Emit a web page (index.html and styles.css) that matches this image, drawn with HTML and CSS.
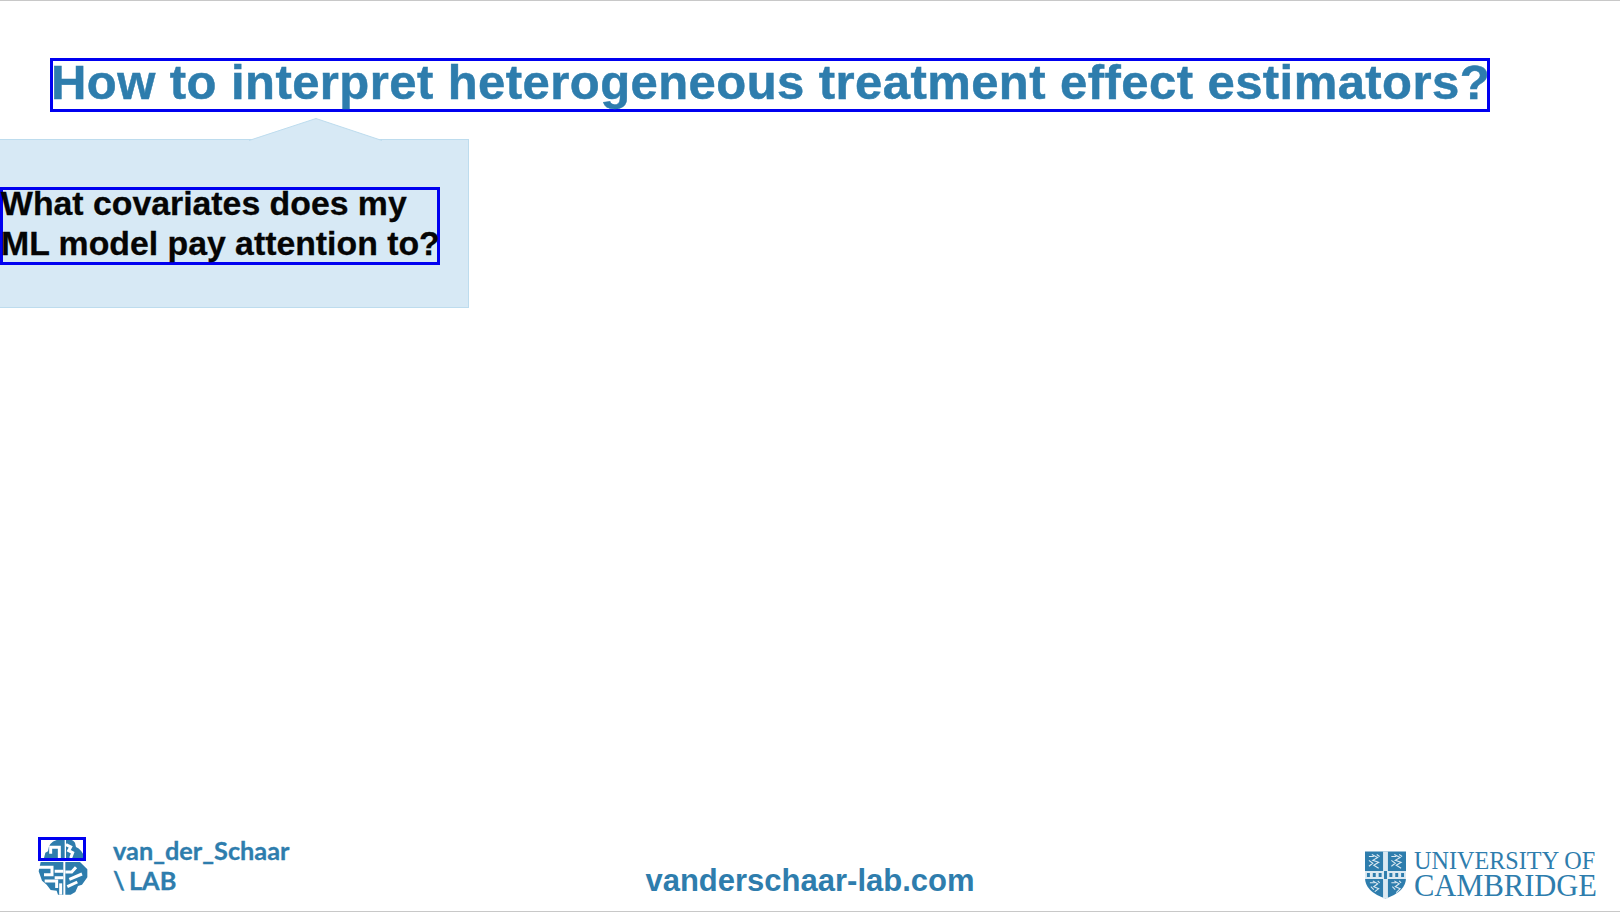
FILE: index.html
```html
<!DOCTYPE html>
<html lang="en">
<head>
<meta charset="utf-8">
<title>How to interpret heterogeneous treatment effect estimators?</title>
<link rel="stylesheet" href="styles.css">
</head>
<body>
<main class="slide">
  <h1 class="title"><span class="title-text">How to interpret heterogeneous treatment effect estimators?</span></h1>
  <section class="callout">
    <svg class="callout-tip" width="134" height="23" viewBox="0 0 134 23" aria-hidden="true">
      <path d="M0 22.5 L67 0.5 L133 22.5" fill="#d7e9f5" stroke="#bddcee" stroke-width="1"/>
    </svg>
    <p class="question"><span class="question-text">What covariates does my<br>ML model pay attention to?</span></p>
  </section>
  <footer class="footer">
    <div class="lab">
      <div class="lab-mark">
        <svg class="brain" width="50" height="60" viewBox="24 25 150 180" aria-hidden="true">
          <path fill="#2e7dad" d="M42 88 L46 72 L54 68 Q56 40 80 34 L104 34 L104 88 Z"/>
          <path fill="#2e7dad" d="M108 34 Q125 28 135 42 L138 55 Q155 62 165 88 L108 88 Z"/>
          <path fill="#2e7dad" d="M32 100 L100 100 L100 198 L84 198 L80 186 L62 184 L50 168 L36 156 L26 128 Z"/>
          <path fill="#2e7dad" d="M106 100 H150 L172 122 L172 146 L156 168 L144 172 L136 190 L122 198 L106 198 Z"/>
          <g fill="none" stroke="#fff" stroke-width="9">
            <path d="M62 75 V56 H88 V88"/>
            <path d="M108 48 L122 55 L116 66 L128 72 L122 88"/>
            <path d="M24 116 H66 V138 H42"/>
            <path d="M74 128 H100 M74 147 H100"/>
            <path d="M44 157 H80 V178"/>
            <path d="M92 164 V198"/>
            <path d="M106 130 H125 L138 116"/>
            <path d="M118 152 L156 136"/>
            <path d="M112 174 L142 160"/>
          </g>
        </svg>
      </div>
      <div class="lab-name">van_der_Schaar<br>\ LAB</div>
    </div>
    <div class="site">vanderschaar-lab.com</div>
    <div class="cambridge">
      <svg class="shield" width="41" height="48" viewBox="0 0 42 48" aria-hidden="true">
        <path d="M0 0 H42 V27 Q42 41 21 48 Q0 41 0 27 Z" fill="#2e7dad"/>
        <path d="M18.5 0 H23.5 V48 H18.5 Z M0 20 H42 V28 H0 Z" fill="#dbe9f2"/>
        <g fill="none" stroke="#dbe9f2" stroke-width="1.1">
          <path d="M4 5 H9 M7 3 L13 6 L8 9 L14 11 L9 14 L14 17 M4 9 L8 12 L4 15 M12 3 L15 5"/>
          <path d="M27 5 H32 M30 3 L36 6 L31 9 L37 11 L32 14 L37 17 M27 9 L31 12 L27 15 M35 3 L38 5"/>
          <path d="M5 32 H10 M8 30 L13 33 L9 36 L14 38 L10 41 M6 36 L9 39 M13 30 L15 32"/>
          <path d="M27 32 H32 M30 30 L35 33 L31 36 L36 38 L32 42 M28 36 L31 39 M35 30 L37 32"/>
        </g>
        <path fill="#2e7dad" d="M2 22 H5 V26 H2 Z M8 22 H11 V26 H8 Z M14 22 H17 V26 H14 Z M25 22 H28 V26 H25 Z M31 22 H34 V26 H31 Z M37 22 H40 V26 H37 Z M19.5 20 H22.5 V28 H19.5 Z"/>
      </svg>
      <div class="cambridge-name"><span class="cam-top">UNIVERSITY OF</span><span class="cam-bottom">CAMBRIDGE</span></div>
    </div>
  </footer>
</main>
</body>
</html>
```
FILE: styles.css
```css
* { box-sizing: border-box; }
html, body { margin: 0; padding: 0; background: #fff; }
.slide {
  width: 1620px;
  height: 912px;
  overflow: hidden;
  display: flex;
  flex-direction: column;
  background: #fff;
  border-top: 1px solid #c8c8c8;
  border-bottom: 1px solid #c8c8c8;
}
.title {
  align-self: flex-start;
  margin: 57px 0 0 50px;
  width: 1440px;
  height: 54px;
  border: 3px solid #0000f0;
  font: 700 49px/45px "Liberation Sans", Arial, sans-serif;
  letter-spacing: 0.44px;
  color: #2e7dad;
  white-space: nowrap;
  -webkit-text-stroke: 0.5px #2e7dad;
}
.title-text {
  display: block;
  margin: -1px 0 0 -2px;
}
.callout {
  position: relative;
  margin-top: 27px;
  width: 469px;
  height: 169px;
  background: #d7e9f5;
  border: 1px solid #bddcee;
  border-left: 0;
  padding-top: 47px;
}
.callout-tip {
  position: absolute;
  left: 249px;
  top: -22px;
  display: block;
}
.question {
  margin: 0;
  width: 440px;
  height: 78px;
  border: 3px solid #0000f0;
  font: 700 33.8px/40px "Liberation Sans", Arial, sans-serif;
  color: #050505;
  white-space: nowrap;
  -webkit-text-stroke: 0.3px #050505;
}
.question-text {
  display: block;
  margin-top: -7px;
  margin-left: -2px;
}
.footer {
  margin-top: auto;
  height: 74px;
  display: grid;
  grid-template-columns: 1fr auto 1fr;
  align-items: start;
  padding: 0 23px;
}
.lab { display: flex; gap: 25px; margin-left: 15px; }
.lab-mark { position: relative; width: 50px; height: 60px; }
.lab-mark::after {
  content: "";
  box-sizing: border-box;
  position: absolute;
  left: 0;
  top: 0;
  width: 48px;
  height: 24px;
  border: 3px solid #0000f0;
}
.brain { display: block; }
.lab-name {
  margin-top: -2px;
  font: 700 25.3px/30px Lato, "Liberation Sans", sans-serif;
  word-spacing: -2px;
  color: #2e7dad;
  white-space: nowrap;
  -webkit-text-stroke: 0.3px #2e7dad;
}
.site {
  font: 700 31px/36px "Liberation Sans", Arial, sans-serif;
  color: #2e7dad;
  padding-top: 26px;
  white-space: nowrap;
}
.cambridge {
  justify-self: end;
  display: flex;
  gap: 8px;
  padding-top: 14px;
}
.shield { display: block; }
.cambridge-name {
  margin-top: -2px;
  display: flex;
  flex-direction: column;
  font-family: "Liberation Serif", "Times New Roman", serif;
  color: #2e7dad;
  white-space: nowrap;
}
.cam-top { font-size: 24.2px; line-height: 24px; }
.cam-bottom { font-size: 30.5px; line-height: 26px; }
```
